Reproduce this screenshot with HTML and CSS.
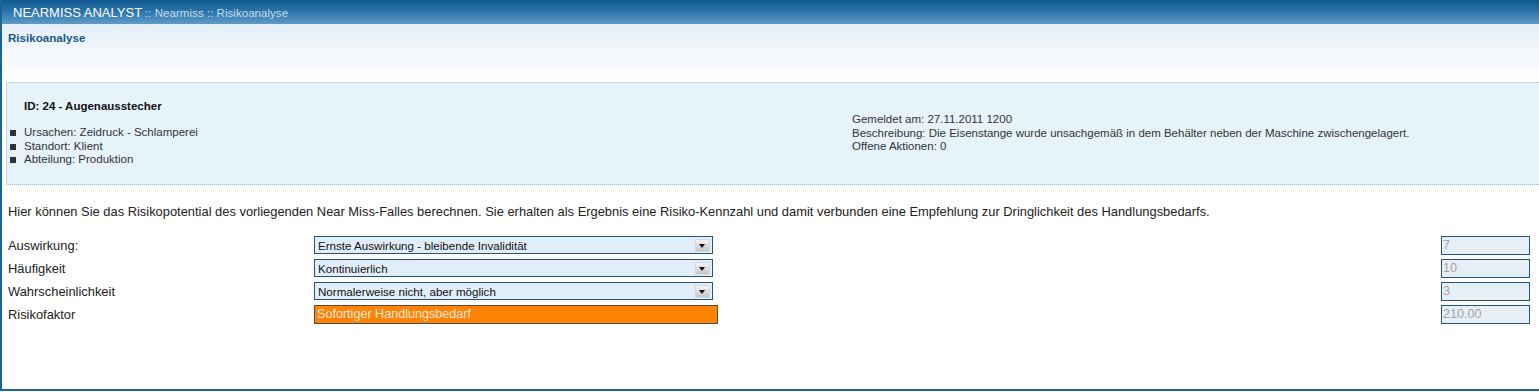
FILE: index.html
```html
<!DOCTYPE html>
<html lang="de">
<head>
<meta charset="utf-8">
<title>Risikoanalyse</title>
<link rel="stylesheet" href="styles.css">
</head>
<body>
<div class="page">
  <div class="topbar">
    <span class="app">NEARMISS ANALYST</span><span class="crumbs"> :: Nearmiss :: Risikoanalyse</span>
  </div>
  <div class="subhead">
    <h1 class="title">Risikoanalyse</h1>
  </div>
  <div class="info">
    <div class="info-left">
      <div class="case">ID: 24 - Augenausstecher</div>
      <ul class="facts">
        <li>Ursachen: Zeidruck - Schlamperei</li>
        <li>Standort: Klient</li>
        <li>Abteilung: Produktion</li>
      </ul>
    </div>
    <div class="info-right">
      <div>Gemeldet am: 27.11.2011 1200</div>
      <div>Beschreibung: Die Eisenstange wurde unsachgemäß in dem Behälter neben der Maschine zwischengelagert.</div>
      <div>Offene Aktionen: 0</div>
    </div>
  </div>
  <p class="intro">Hier können Sie das Risikopotential des vorliegenden Near Miss-Falles berechnen. Sie erhalten als Ergebnis eine Risiko-Kennzahl und damit verbunden eine Empfehlung zur Dringlichkeit des Handlungsbedarfs.</p>
  <div class="form">
    <div class="row">
      <span class="label">Auswirkung:</span>
      <div class="select"><span class="val">Ernste Auswirkung - bleibende Invalidität</span><span class="arrow"></span></div>
      <div class="num">7</div>
    </div>
    <div class="row">
      <span class="label">Häufigkeit</span>
      <div class="select"><span class="val">Kontinuierlich</span><span class="arrow"></span></div>
      <div class="num">10</div>
    </div>
    <div class="row">
      <span class="label">Wahrscheinlichkeit</span>
      <div class="select"><span class="val">Normalerweise nicht, aber möglich</span><span class="arrow"></span></div>
      <div class="num">3</div>
    </div>
    <div class="row">
      <span class="label">Risikofaktor</span>
      <div class="result">Sofortiger Handlungsbedarf</div>
      <div class="num">210.00</div>
    </div>
  </div>
</div>
</body>
</html>
```

FILE: styles.css
```css
html, body {
  margin: 0;
  padding: 0;
  background: #ffffff;
}
body {
  font-family: "Liberation Sans", Arial, sans-serif;
  color: #222222;
  overflow: hidden;
}
.page {
  height: 389px;
  border-left: 2px solid #1b6497;
  border-bottom: 2px solid #1b6497;
  background: #ffffff;
}
.topbar {
  height: 24px;
  background: linear-gradient(#0e5891 0%, #2a73a8 45%, #5e9bc8 100%);
  padding-left: 11px;
  display: flex;
  align-items: center;
  white-space: nowrap;
}
.app {
  color: #ffffff;
  font-size: 13px;
}
.crumbs {
  color: #c4dcef;
  font-size: 11.6px;
  margin-left: 3px;
}
.subhead {
  height: 58px;
  background: linear-gradient(#e4eff8 0%, #f3f8fc 50%, #ffffff 100%);
  padding: 7px 0 0 6px;
  box-sizing: border-box;
}
.title {
  margin: 0;
  font-size: 11.6px;
  font-weight: bold;
  color: #1a5887;
}
.info {
  margin-left: 4px;
  height: 103px;
  box-sizing: border-box;
  border-top: 1px dotted #9ab8cc;
  border-bottom: 1px dotted #9ab8cc;
  border-left: 1px dotted #9ab8cc;
  background: #e6f3fb;
  display: flex;
  font-size: 11.5px;
  color: #333333;
}
.info-left {
  width: 845px;
  padding-top: 16px;
}
.case {
  font-weight: bold;
  color: #111111;
  padding-left: 17px;
  line-height: 14px;
}
.facts {
  list-style: none;
  margin: 13px 0 0 0;
  padding: 0;
}
.facts li {
  line-height: 13.5px;
  padding-left: 17px;
  position: relative;
}
.facts li::before {
  content: "";
  position: absolute;
  left: 3px;
  top: 4px;
  width: 6px;
  height: 6px;
  background: #333333;
}
.info-right {
  padding-top: 30px;
  line-height: 13.5px;
}
.intro {
  margin: 19px 0 0 6px;
  font-size: 12.9px;
  line-height: 15px;
  color: #222222;
  white-space: nowrap;
}
.form {
  margin-top: 17px;
  padding-left: 6px;
  display: flex;
  flex-direction: column;
  gap: 5px;
}
.row {
  display: flex;
  align-items: center;
  height: 18px;
  font-size: 12.9px;
}
.label {
  width: 306px;
  color: #222222;
}
.select {
  width: 399px;
  height: 18px;
  box-sizing: border-box;
  border: 1px solid #22557c;
  background: #e1eefa;
  display: flex;
  align-items: center;
  justify-content: space-between;
  padding: 0 2px 0 3px;
}
.val {
  font-size: 11.6px;
  color: #111111;
}
.arrow {
  width: 15px;
  height: 13px;
  background: linear-gradient(#f4f4f4, #c6c6c6);
  border: 1px solid #d8d8d8;
  box-sizing: border-box;
  position: relative;
}
.arrow::after {
  content: "";
  position: absolute;
  left: 3px;
  top: 4px;
  border-left: 3.5px solid transparent;
  border-right: 3.5px solid transparent;
  border-top: 4px solid #111111;
}
.result {
  width: 404px;
  height: 19px;
  box-sizing: border-box;
  border: 1px solid #5a4a3a;
  background: #ff8405;
  color: #f4e7da;
  font-size: 12.6px;
  line-height: 17px;
  padding-left: 2px;
}
.num {
  margin-left: auto;
  margin-right: 9px;
  width: 89px;
  height: 19px;
  box-sizing: border-box;
  border: 1px solid #22557c;
  background: #e6eef6;
  color: #a4a4a4;
  font-size: 12.6px;
  line-height: 17px;
  padding-left: 1px;
}
```
